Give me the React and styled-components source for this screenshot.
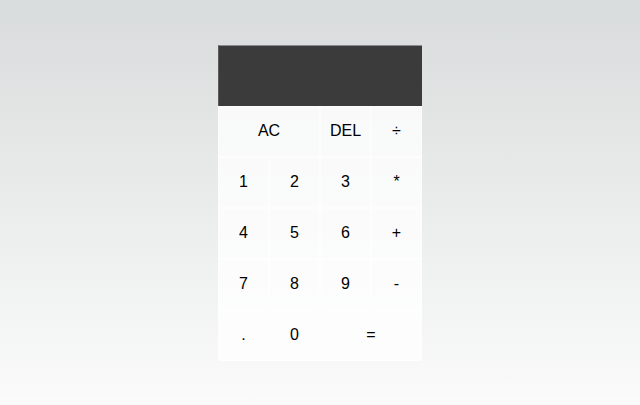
import React from 'react';
import styled, { createGlobalStyle } from 'styled-components';

const GlobalStyle = createGlobalStyle`
    *, *::before, *::after {
        box-sizing: border-box;
    }
    body {
        margin: 0;
        font-family: "Liberation Sans", Arial, sans-serif;
        background: linear-gradient(to bottom, #d9dcdc, #fbfbfb);
        min-height: 100vh;
    }
`;

const keys = [
    { label: 'AC', span: 2 },
    { label: 'DEL' },
    { label: '÷' },
    { label: '1' },
    { label: '2' },
    { label: '3' },
    { label: '*' },
    { label: '4' },
    { label: '5' },
    { label: '6' },
    { label: '+' },
    { label: '7' },
    { label: '8' },
    { label: '9' },
    { label: '-' },
    { label: '.' },
    { label: '0' },
    { label: '=', span: 2 },
];

function App() {
    return (
        <>
            <GlobalStyle />
            <Page>
                <CalculatorGrid>
                    <Output>
                        <div className="previous"></div>
                        <div className="current"></div>
                    </Output>
                    {
                        keys.map((key) => {
                            return <Key key={key.label} $span={key.span}>{key.label}</Key>
                        })
                    }
                </CalculatorGrid>
            </Page>
        </>
    );
}

const Page = styled.div`
    min-height: 100vh;
    display: flex;
    align-items: center;
    justify-content: center;
`;

const CalculatorGrid = styled.div`
    display: grid;
    grid-template-columns: repeat(4, 51px);
    grid-template-rows: 61px repeat(5, 51px);
`;

const Output = styled.div`
    grid-column: 1 / -1;
    background-color: #3a3b3a;
    border-top: 1px solid #8a8b8a;
    border-left: 1px solid #5a5b5a;
    display: flex;
    flex-direction: column;
    align-items: flex-end;
    justify-content: space-around;
    padding: 10px;
    color: white;
`;

const Key = styled.button`
    grid-column: span ${(props) => props.$span || 1};
    font-family: "Liberation Sans", Arial, sans-serif;
    font-size: 16px;
    color: #000;
    background-color: rgba(255, 255, 255, .78);
    border: 1px solid rgba(255, 255, 255, .5);
    outline: none;
    padding: 0;
    cursor: pointer;
`;

export default App;
